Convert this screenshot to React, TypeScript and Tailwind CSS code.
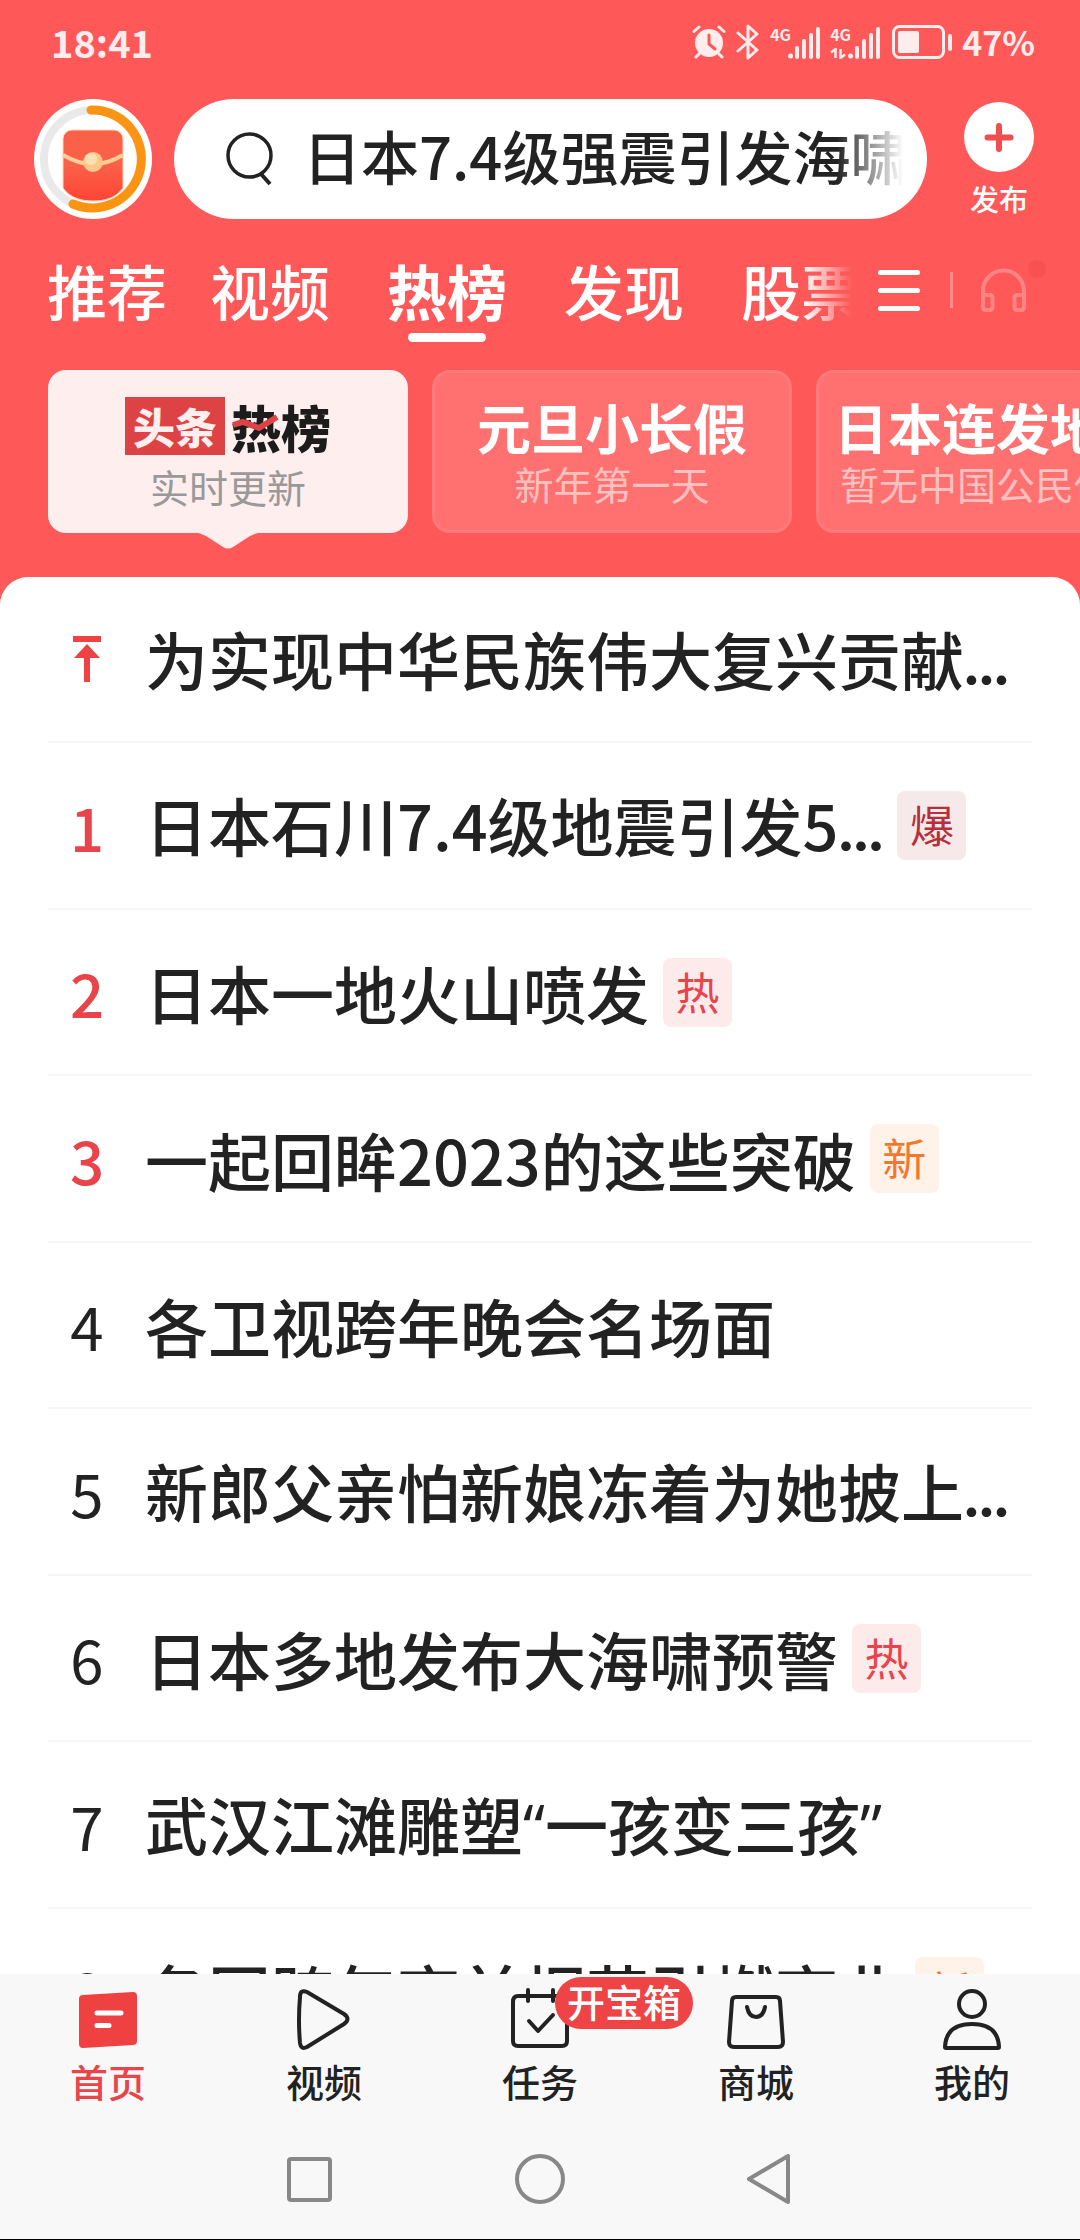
import { ReactNode } from "react";

const StatusBar = () => (
  <div className="flex h-[84px] items-center justify-between pl-[51px] pr-[45px] text-[#ffecec]">
    <time className="text-[38px] font-bold leading-none">18:41</time>
    <div className="flex items-center">
      <svg className="h-[34px] w-[34px]" viewBox="0 0 34 34" fill="none" stroke="currentColor" strokeLinecap="round">
        <circle cx="17" cy="18" r="14" fill="currentColor" stroke="none" />
        <path d="M2 6.500L7 2M32 6.500L27 2M7 29l-3 3M27 29l3 3" strokeWidth="3" />
        <path d="M17 10v9l6 5" stroke="#ff5858" strokeWidth="3" strokeLinejoin="round" />
      </svg>
      <svg className="ml-2.5 h-9 w-[24px]" viewBox="0 0 24 36" fill="none" stroke="currentColor" strokeWidth="3" strokeLinejoin="round" strokeLinecap="round">
        <path d="M2 9l19 17-9 8V2l9 8L2 27" />
      </svg>
      <Signal />
      <Signal data />
      <svg className="ml-3 h-[34px] w-[60px]" viewBox="0 0 60 34" fill="none">
        <rect x="1.500" y="1.500" width="50" height="31" rx="6" stroke="currentColor" strokeWidth="3" />
        <rect x="6" y="6" width="21" height="22" rx="2" fill="currentColor" />
        <rect x="56" y="9" width="4" height="17" rx="2" fill="currentColor" />
      </svg>
      <span className="ml-2.5 text-[34px] font-bold leading-none">47%</span>
    </div>
  </div>
);

const Signal = ({ data = false }: { data?: boolean }) => (
  <div className="ml-2.5 flex h-[34px] items-end">
    <div className="flex h-full w-[18px] flex-col justify-between">
      <span className="text-[16px] font-bold leading-[18px]">4G</span>
      {data && (
        <svg className="h-[11px] w-[16px]" viewBox="0 0 16 11" fill="none" stroke="currentColor" strokeWidth="2.500">
          <path d="M1 4.500L5.500 1v9M10.500 1v9L15 6.500" />
        </svg>
      )}
    </div>
    <svg className="h-8 w-[32px]" viewBox="0 0 32 32" fill="currentColor">
      <circle cx="2.500" cy="29" r="2.500" />
      <rect x="7" y="19" width="4" height="13" rx="2" />
      <rect x="14" y="12" width="4" height="20" rx="2" />
      <rect x="21" y="6" width="4" height="26" rx="2" />
      <rect x="28" y="0" width="4" height="32" rx="2" />
    </svg>
  </div>
);

const SearchHeader = () => (
  <div className="flex items-center pl-[34px] pr-[46px] pt-[15px]">
    <button aria-label="红包" className="shrink-0">
      <svg className="h-[120px] w-[118px]" viewBox="0 0 118 120" fill="none">
        <defs>
          <linearGradient id="packet" x1="0" y1="0" x2="0" y2="1">
            <stop offset="0" stopColor="#fb6148" />
            <stop offset="0.500" stopColor="#fb6148" />
            <stop offset="1" stopColor="#fe4434" />
          </linearGradient>
        </defs>
        <ellipse cx="59" cy="60" rx="59" ry="60" fill="#fff" />
        <circle cx="59" cy="60" r="49" stroke="#e9e9e9" strokeWidth="8" />
        <path d="M57 11A49 49 0 1 1 39 105" stroke="#fb9412" strokeWidth="9" strokeLinecap="round" />
        <path d="M29 40a9 9 0 0 1 9-9h42a9 9 0 0 1 9 9v49C82 99 71 102 59 102S36 99 29 89z" fill="url(#packet)" stroke="#fdd6b8" strokeWidth="1" />
        <path d="M29 56q30 18 60 0" stroke="#fdcf98" strokeWidth="4" />
        <circle cx="59" cy="63" r="10" fill="#fdc98a" />
        <circle cx="57" cy="60" r="6" fill="#ffe0b4" />
      </svg>
    </button>

    <label className="ml-[22px] flex h-[120px] min-w-0 flex-1 items-center rounded-full bg-white pl-[52px] pr-[24px]">
      <svg className="h-[54px] w-[48px] shrink-0" viewBox="0 0 48 54" fill="none" stroke="#222" strokeWidth="3.500">
        <circle cx="23.500" cy="23.500" r="21.500" />
        <path d="M35 42l9 10" strokeWidth="4" />
      </svg>
      <input
        aria-label="搜索"
        defaultValue="日本7.4级强震引发海啸"
        className="ml-[29px] h-[92px] min-w-0 flex-1 pb-2 text-[58px] font-medium text-[#222] outline-none [mask-image:linear-gradient(to_right,black_89%,transparent)]"
      />
    </label>

    <button className="ml-[37px] flex flex-col items-center gap-2 text-white">
      <svg className="h-[70px] w-[70px]" viewBox="0 0 70 70">
        <circle cx="35" cy="35" r="35" fill="#fff" />
        <path d="M35 24v23M23.500 35.500h23" stroke="#f04d50" strokeWidth="6" strokeLinecap="round" />
      </svg>
      <span className="text-[29px] font-medium leading-[36px]">发布</span>
    </button>
  </div>
);

const tabs = ["推荐", "视频", "热榜", "发现", "股票"];

const ChannelTabs = () => (
  <nav className="flex h-[151px] items-center pb-[9px] pl-[47px] pr-[33px] text-white">
    <div className="flex min-w-0 flex-1 items-center gap-[57px] overflow-hidden [mask-image:linear-gradient(to_right,black_94%,transparent)]">
      {tabs.map((tab) => {
        const active = tab === "热榜";
        return (
          <button
            key={tab}
            className={`relative h-[104px] shrink-0 text-[60px] leading-[96px] first:-mr-3.5 ${
              active ? "font-bold" : "font-medium"
            }`}
          >
            {tab}
            {active && <span className="absolute bottom-0 left-[21px] h-[9px] w-[78px] rounded-full bg-white" />}
          </button>
        );
      })}
    </div>
    <button aria-label="全部频道" className="ml-[26px] flex w-[42px] flex-col gap-[13px]">
      <span className="h-[5px] rounded-full bg-white" />
      <span className="h-[5px] rounded-full bg-white" />
      <span className="h-[5px] rounded-full bg-white" />
    </button>
    <span className="ml-[30px] h-[36px] w-[3px] bg-white/30" />
    <button aria-label="听头条" className="ml-[27px]">
      <svg className="h-[60px] w-[67px]" viewBox="0 0 67 60" fill="none" stroke="#ff8585" strokeWidth="4">
        <path d="M3 43V31a20.500 20.500 0 0 1 41 0v12" />
        <path d="M3 35h6.500q3 0 3 3v9q0 3-3 3H6q-3 0-3-3zM44 35h-6.500q-3 0-3 3v9q0 3 3 3H41q3 0 3-3z" />
        <circle cx="57" cy="9" r="9" fill="#f95052" stroke="none" />
      </svg>
    </button>
  </nav>
);

const topics = [
  { title: "元旦小长假", note: "新年第一天" },
  { title: "日本连发地震", note: "暂无中国公民伤亡" },
];

const TopicCards = () => (
  <div className="flex gap-6 overflow-hidden pb-[44px] pl-12">
    <button className="relative flex h-[163px] w-[360px] shrink-0 flex-col items-center rounded-[18px] bg-[#feeeee] pt-[27px]">
      <span className="flex items-center gap-1.5 font-black leading-[58px]">
        <span className="w-[100px] bg-[#dd4344] text-center text-[42px] text-[#feeeee]">头条</span>
        <span className="relative text-[50px] text-[#1c1c1c]">
          热榜
          <svg className="absolute left-0 top-[16px] h-[20px] w-[50px]" viewBox="0 0 50 20" fill="none">
            <path d="M2 12l10-3 16 6 18-11" stroke="#dd4344" strokeWidth="6" />
          </svg>
        </span>
      </span>
      <span className="mt-[6px] text-[39px] leading-[50px] text-[#999]">实时更新</span>
      <svg className="absolute -bottom-[16px] left-[146px] h-[17px] w-[68px]" viewBox="0 0 68 17" fill="#feeeee">
        <path d="M0 0q6 1 12 4l17 11q5 3 10 0l17-11q6-3 12-4z" />
      </svg>
    </button>
    {topics.map((topic) => (
      <button
        key={topic.title}
        className="flex h-[163px] w-[360px] shrink-0 flex-col items-center rounded-[18px] border-3 border-[#ff7a7a] bg-[#ff7070] pt-[25px]"
      >
        <span className="text-[54px] font-bold leading-[58px] text-white">{topic.title}</span>
        <span className="mt-[2px] text-[39px] leading-[50px] text-[#ffc0c0]">{topic.note}</span>
      </button>
    ))}
  </div>
);

type HotItem = { rank: number; title: string; tag?: "爆" | "热" | "新" };

const hotList: HotItem[] = [
  { rank: 0, title: "为实现中华民族伟大复兴贡献..." },
  { rank: 1, title: "日本石川7.4级地震引发5...", tag: "爆" },
  { rank: 2, title: "日本一地火山喷发", tag: "热" },
  { rank: 3, title: "一起回眸2023的这些突破", tag: "新" },
  { rank: 4, title: "各卫视跨年晚会名场面" },
  { rank: 5, title: "新郎父亲怕新娘冻着为她披上..." },
  { rank: 6, title: "日本多地发布大海啸预警", tag: "热" },
  { rank: 7, title: "武汉江滩雕塑“一孩变三孩”" },
  { rank: 8, title: "各国跨年夜前烟花引燃夜业", tag: "新" },
];

const tagStyles = {
  爆: "bg-[#f6e9ea] text-[#b5303a]",
  热: "bg-[#fdebec] text-[#e8444c]",
  新: "bg-[#fff2e9] text-[#f5772d]",
};

// Quotes and dots take a Latin face, the CJK one sets them too wide
const HotTitle = ({ text }: { text: string }) => (
  <span className="ml-[19px] whitespace-nowrap text-[63px] font-medium text-[#222]">
    {text.split(/([“”]|\.{3})/).map((part, index) =>
      index % 2 === 1 ? (
        <span
          key={index}
          className={part === "..." ? "font-['Lato',sans-serif] font-bold" : "font-['Open_Sans',sans-serif]"}
        >
          {part}
        </span>
      ) : (
        part
      )
    )}
  </span>
);

const HotRow = ({ item }: { item: HotItem }) => (
  <li className="border-b-2 border-[#f6f6f6] odd:h-[166px] even:h-[167px]">
    <a href="#" className="flex h-full items-center leading-[80px]">
      <span
        className={`flex w-[78px] shrink-0 justify-center text-[60px] ${
          item.rank < 4 ? "font-medium text-[#e8444a]" : "text-[#222]"
        }`}
      >
        {item.rank > 0 ? (
          item.rank
        ) : (
          <svg className="h-[46px] w-[30px]" viewBox="0 0 30 46" fill="#ef4244">
            <path d="M1 0h28v6H1zM15 8l13 14h-10v24h-6V22H2z" />
          </svg>
        )}
      </span>
      <HotTitle text={item.title} />
      {item.tag && (
        <span className={`ml-[14px] h-[69px] w-[69px] rounded-lg text-center text-[44px] leading-[66px] ${tagStyles[item.tag]}`}>
          {item.tag}
        </span>
      )}
    </a>
  </li>
);

const navItems: { label: string; badge?: string; icon: ReactNode }[] = [
  {
    label: "首页",
    icon: (
      <>
        <path d="M8 11q0-4 4-4l50-3q4 0 4 4v45q0 4-4 4l-50 3q-4 0-4-4z" transform="translate(-1 1)" fill="#f04142" stroke="none" />
        <path d="M25 26h24M25 38.500h12" stroke="#fff" strokeWidth="5" />
      </>
    ),
  },
  { label: "视频", icon: <path d="M12 10q0-8 7-5l37 22q7 5 0 10L19 60q-6 3-7-4Q10 33 12 10z" /> },
  {
    label: "任务",
    badge: "开宝箱",
    icon: (
      <>
        <path d="M26 9H14q-5 0-5 6v39q0 5 5 5h44q5 0 5-5V15q0-6-5-6h-7M26 9h25M24 3v11M49 3v11" />
        <path d="M25 34l9 10 15-16" />
      </>
    ),
  },
  {
    label: "商城",
    icon: (
      <>
        <path d="M16 10h40q4 0 4 4l3 41q0 5-5 5H14q-5 0-5-5l3-41q0-4 4-4z" />
        <path d="M27 20q2 10 9 10t9-10" />
      </>
    ),
  },
  {
    label: "我的",
    icon: (
      <>
        <circle cx="36" cy="17" r="13" />
        <path d="M9 60Q10 37 36 37T63 60q0 1-1 1H10q-1 0-1-1z" />
      </>
    ),
  },
];

const BottomNav = () => (
  <nav className="grid h-[140px] grid-cols-5 pt-[13px]">
    {navItems.map((item, index) => (
      <a
        key={item.label}
        href="#"
        className={`relative flex flex-col items-center text-[38px] font-medium ${index === 0 ? "text-[#e8444a]" : "text-[#222]"}`}
      >
        <svg className="h-[68px] w-[72px]" viewBox="0 0 72 68" fill="none" stroke="currentColor" strokeWidth="4" strokeLinecap="round" strokeLinejoin="round">
          {item.icon}
        </svg>
        <span className="mt-[2px] leading-[48px]">{item.label}</span>
        {item.badge && (
          <span className="absolute -top-[10px] left-1/2 ml-[15px] h-[52px] whitespace-nowrap rounded-full bg-[#ee4446] px-3 leading-[48px] text-white">
            {item.badge}
          </span>
        )}
      </a>
    ))}
  </nav>
);

const SystemKeys = () => (
  <div className="flex h-[126px] items-center justify-center gap-[181px] border-b border-black pt-1">
    <button aria-label="最近任务">
      <svg className="h-[50px] w-[50px]" viewBox="0 0 50 50" fill="none" stroke="#888" strokeWidth="4">
        <rect x="5" y="5" width="41" height="41" rx="2" />
      </svg>
    </button>
    <button aria-label="主屏幕">
      <svg className="h-[50px] w-[50px]" viewBox="0 0 50 50" fill="none" stroke="#888" strokeWidth="4">
        <circle cx="25" cy="25" r="23" />
      </svg>
    </button>
    <button aria-label="返回">
      <svg className="h-[50px] w-[50px]" viewBox="0 0 50 50" fill="none" stroke="#888" strokeWidth="4" strokeLinejoin="round">
        <path d="M42 2v46L3 25z" />
      </svg>
    </button>
  </div>
);

const App = () => {
  return (
    <div className="flex h-screen flex-col bg-[#ff5858] font-['Noto_Sans_CJK_SC',sans-serif]">
      <header>
        <StatusBar />
        <SearchHeader />
        <ChannelTabs />
        <TopicCards />
      </header>

      <main className="min-h-0 flex-1 overflow-hidden rounded-t-[28px] bg-white px-12">
        <ul>
          {hotList.map((item) => (
            <HotRow key={item.rank} item={item} />
          ))}
        </ul>
      </main>

      <footer className="bg-[#f8f8f8]">
        <BottomNav />
        <SystemKeys />
      </footer>
    </div>
  );
};

export default App;
